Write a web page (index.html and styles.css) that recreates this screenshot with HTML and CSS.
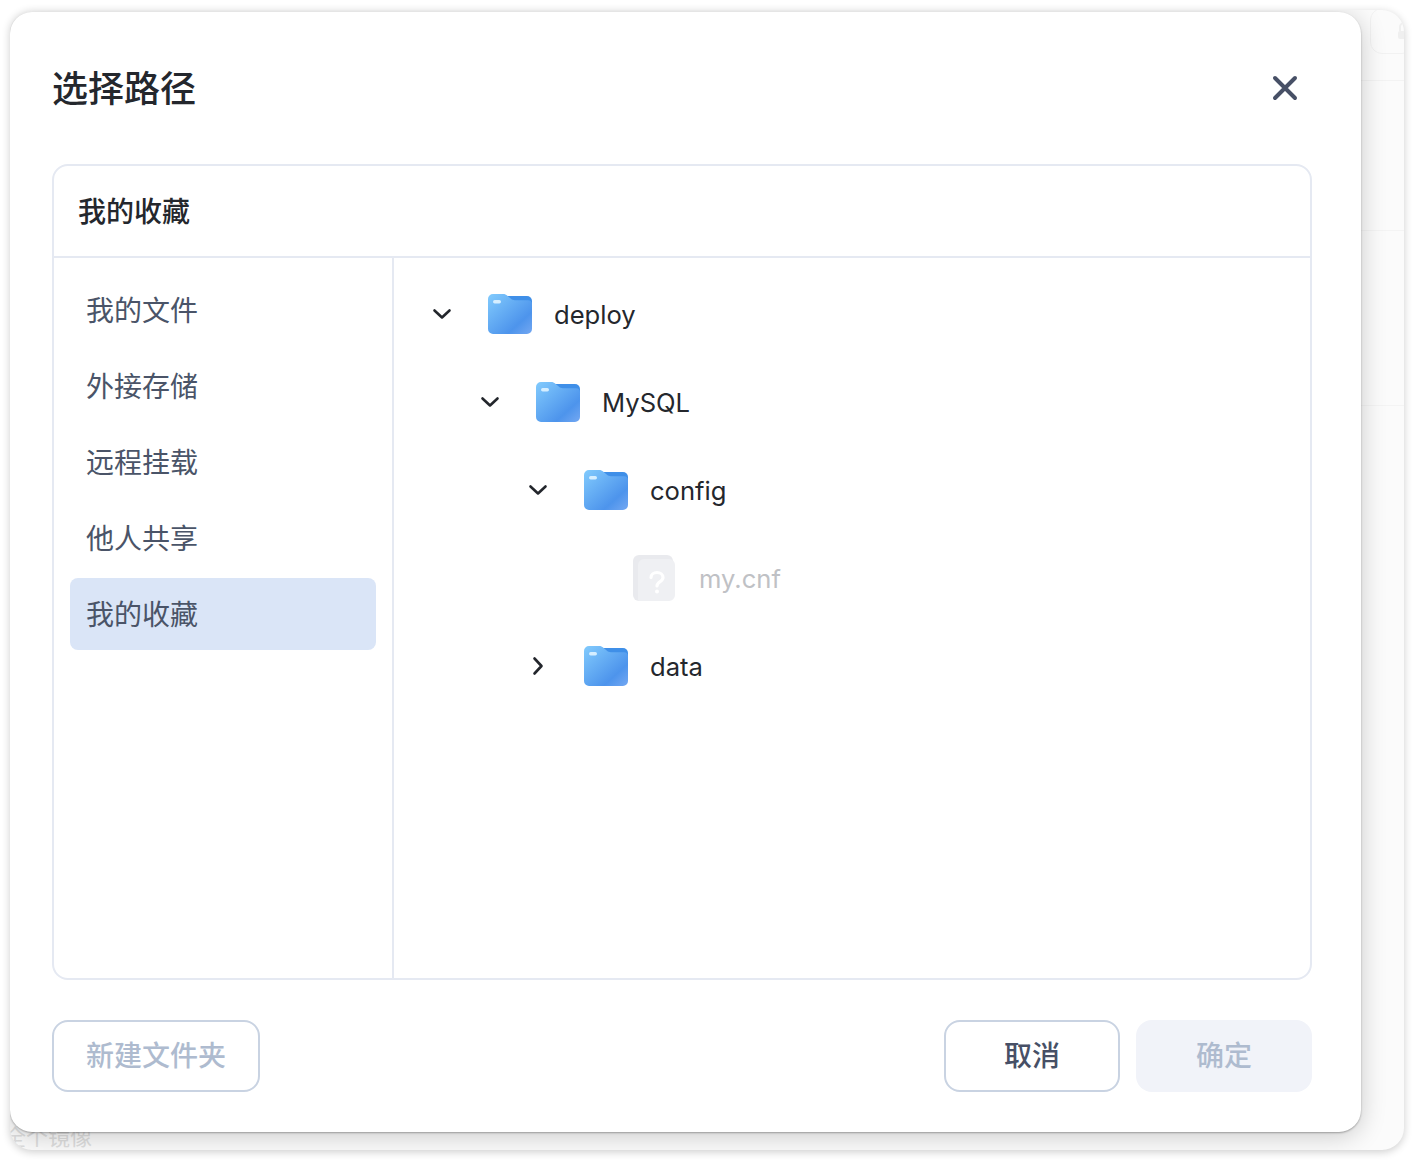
FILE: index.html
```html
<!DOCTYPE html>
<html lang="zh-CN">
<head>
<meta charset="utf-8">
<title>选择路径</title>
<link rel="stylesheet" href="styles.css">
</head>
<body>
<svg class="defs" width="0" height="0" aria-hidden="true">
  <defs>
    <linearGradient id="fg" x1="0" y1="0" x2="1" y2="1">
      <stop offset="0" stop-color="#82cbfd"/>
      <stop offset="0.72" stop-color="#4d94ec"/>
      <stop offset="1" stop-color="#74a8f2"/>
    </linearGradient>
    <symbol id="folder" viewBox="0 0 44 40">
      <path d="M15 2h24a5 5 0 0 1 5 5v8H20z" fill="#3f8fe8"/>
      <path d="M5 0h10c2 0 3 .6 4.400 1.800l3.600 3c1.200 1 2.200 1.400 3.800 1.400H40a4 4 0 0 1 4 4V35a5 5 0 0 1-5 5H5a5 5 0 0 1-5-5V5a5 5 0 0 1 5-5z" fill="url(#fg)"/>
      <rect x="5" y="6" width="8" height="3.400" rx="1.700" fill="#d5eeff"/>
    </symbol>
    <symbol id="down" viewBox="0 0 20 20"><path d="M2.500 6.500 10 13.500l7.500-7" fill="none" stroke="#23262c" stroke-width="2.600" stroke-linecap="round" stroke-linejoin="round"/></symbol>
    <symbol id="right" viewBox="0 0 20 20"><path d="M6.500 2.500 13.500 10l-7 7.500" fill="none" stroke="#23262c" stroke-width="2.600" stroke-linecap="round" stroke-linejoin="round"/></symbol>
  </defs>
</svg>
<div class="window">
  <div class="window-bar">
    <div class="ghost-btn">
      <svg class="ghost-icon" width="12" height="20" viewBox="0 0 12 20"><path d="M2 10V6a4 4 0 0 1 8 0v4" fill="none" stroke="#efefef" stroke-width="2"/><rect x="0" y="10" width="12" height="8" rx="2" fill="#efefef"/></svg>
    </div>
  </div>
  <div class="window-row"></div>
  <div class="window-row"></div>
  <div class="window-foot">全个镜像</div>
  <section class="dialog">
    <header class="dialog-head">
      <h1 class="dialog-title">选择路径</h1>
      <svg class="close" width="26" height="26" viewBox="0 0 26 26"><path d="M3 3l20 20M23 3 3 23" fill="none" stroke="#475066" stroke-width="4" stroke-linecap="round"/></svg>
    </header>
    <div class="panel">
      <div class="panel-head">我的收藏</div>
      <div class="panel-body">
        <nav class="side">
          <div class="side-item">我的文件</div>
          <div class="side-item">外接存储</div>
          <div class="side-item">远程挂载</div>
          <div class="side-item">他人共享</div>
          <div class="side-item active">我的收藏</div>
        </nav>
        <div class="tree">
          <div class="row"><svg class="chev" width="20" height="20"><use href="#down"/></svg><svg class="ficon" width="44" height="40"><use href="#folder"/></svg><span class="name">deploy</span></div>
          <div class="row lv1"><svg class="chev" width="20" height="20"><use href="#down"/></svg><svg class="ficon" width="44" height="40"><use href="#folder"/></svg><span class="name">MySQL</span></div>
          <div class="row lv2"><svg class="chev" width="20" height="20"><use href="#down"/></svg><svg class="ficon" width="44" height="40"><use href="#folder"/></svg><span class="name">config</span></div>
          <div class="row lv3 off"><span class="chev-slot"></span>
            <svg class="fileicon" width="42" height="46" viewBox="0 0 42 46">
              <path d="M6 0h28a6 6 0 0 1 6 6v34a6 6 0 0 1-6 6H6a6 6 0 0 1-6-6V6a6 6 0 0 1 6-6z" fill="#e9eaee"/>
              <path d="M11 4h25a6 6 0 0 1 6 6v30a6 6 0 0 1-6 6H6a4 4 0 0 1-1-1V10a6 6 0 0 1 6-6z" fill="#eff0f3"/>
              <path d="M18 22.500c0-3 2.600-5 6-5s6 2 6 5c0 4.200-6 4.400-6 8.500" fill="none" stroke="#fff" stroke-width="3.200" stroke-linecap="round"/>
              <circle cx="24" cy="36.500" r="2" fill="#fff"/>
            </svg>
            <span class="name">my.cnf</span></div>
          <div class="row lv2"><svg class="chev" width="20" height="20"><use href="#right"/></svg><svg class="ficon" width="44" height="40"><use href="#folder"/></svg><span class="name">data</span></div>
        </div>
      </div>
    </div>
    <footer class="dialog-foot">
      <button class="btn btn-new" type="button">新建文件夹</button>
      <div class="foot-right">
        <button class="btn btn-cancel" type="button">取消</button>
        <button class="btn btn-ok" type="button">确定</button>
      </div>
    </footer>
  </section>
</div>
</body>
</html>
```
FILE: styles.css
```css
* { box-sizing: border-box; }
html, body { margin: 0; padding: 0; background: #fff; }
body {
  width: 1414px;
  height: 1160px;
  padding: 10px;
  overflow: hidden;
  font-family: Inter, "Noto Sans CJK SC", "Noto Sans", sans-serif;
}
.defs { position: absolute; }
.window {
  position: relative;
  width: 1394px;
  height: 1140px;
  border-radius: 22px;
  background: #fbfbfb;
  box-shadow: 0 2px 8px rgba(0, 0, 0, .2);
  overflow: hidden;
}
.window-bar { height: 71px; display: flex; justify-content: flex-end; border-bottom: 1px solid #f3f3f3; }
.ghost-btn {
  position: relative;
  width: 44px;
  height: 46px;
  margin-right: -10px;
  margin-top: -2px;
  border: 1px solid #f2f2f2;
  border-radius: 12px;
}
.ghost-icon { position: absolute; left: 27px; top: 12px; }
.window-row { height: 150px; border-bottom: 1px solid #f4f4f4; }
.window-row + .window-row { height: 175px; }
.window-foot {
  position: absolute;
  left: -6px;
  bottom: 2px;
  font-size: 22px;
  line-height: 22px;
  color: #dedede;
}
.dialog {
  position: absolute;
  left: 0;
  top: 2px;
  width: 1351px;
  height: 1120px;
  padding: 0 48px 40px 42px;
  border-radius: 22px;
  background: #fff;
  display: flex;
  flex-direction: column;
  box-shadow: 0 1px 2px rgba(0, 0, 0, .3), 0 4px 26px rgba(0, 0, 0, .2);
}
.dialog-head {
  height: 152px;
  flex: none;
  display: flex;
  align-items: flex-start;
  justify-content: space-between;
  padding-top: 54px;
}
.dialog-title {
  margin: 0;
  font-size: 36px;
  line-height: 46px;
  font-weight: 500;
  color: #24272d;
}
.close { margin: 9px 15px 0 0; }
.panel {
  width: 1260px;
  height: 816px;
  flex: none;
  border: 2px solid #e5e9f2;
  border-radius: 16px;
  display: flex;
  flex-direction: column;
}
.panel-head {
  height: 92px;
  flex: none;
  padding: 0 0 2px 24px;
  display: flex;
  align-items: center;
  font-size: 28px;
  font-weight: 500;
  color: #24272d;
  border-bottom: 2px solid #e5e9f2;
}
.panel-body { flex: 1; display: flex; min-height: 0; }
.side {
  width: 340px;
  flex: none;
  padding: 16px;
  border-right: 2px solid #e5e9f2;
  display: flex;
  flex-direction: column;
  gap: 4px;
}
.side-item {
  height: 72px;
  width: 306px;
  padding: 0 0 2px 16px;
  display: flex;
  align-items: center;
  font-size: 28px;
  color: #4a5468;
  border-radius: 8px;
}
.side-item.active { background: #dae5f7; }
.tree { flex: 1; padding: 12px 0 0 38px; }
.row { height: 88px; display: flex; align-items: center; }
.lv1 { padding-left: 48px; }
.lv2 { padding-left: 96px; }
.lv3 { padding-left: 144px; }
.chev { flex: none; width: 20px; height: 20px; margin-right: 36px; }
.chev-slot { flex: none; width: 56px; }
.ficon { flex: none; margin-right: 22px; }
.fileicon { flex: none; margin: 0 24px 0 1px; }
.name { font-size: 25.6px; line-height: 32px; color: #24272d; position: relative; top: 1px; }
.off .name { color: #bfc1c5; }
.dialog-foot {
  width: 1260px;
  margin-top: 40px;
  flex: none;
  display: flex;
  justify-content: space-between;
}
.foot-right { display: flex; gap: 16px; }
.btn {
  height: 72px;
  border-radius: 16px;
  font-family: inherit;
  font-size: 28px;
  font-weight: 500;
  line-height: 36px;
  background: #fff;
  border: 2px solid #c9d3e2;
  padding: 0;
  color: #475066;
}
.btn-new { width: 208px; color: #aebbcf; }
.btn-cancel { width: 176px; }
.btn-ok { width: 176px; border: 0; background: #f1f3f9; color: #aebbcf; }
```
